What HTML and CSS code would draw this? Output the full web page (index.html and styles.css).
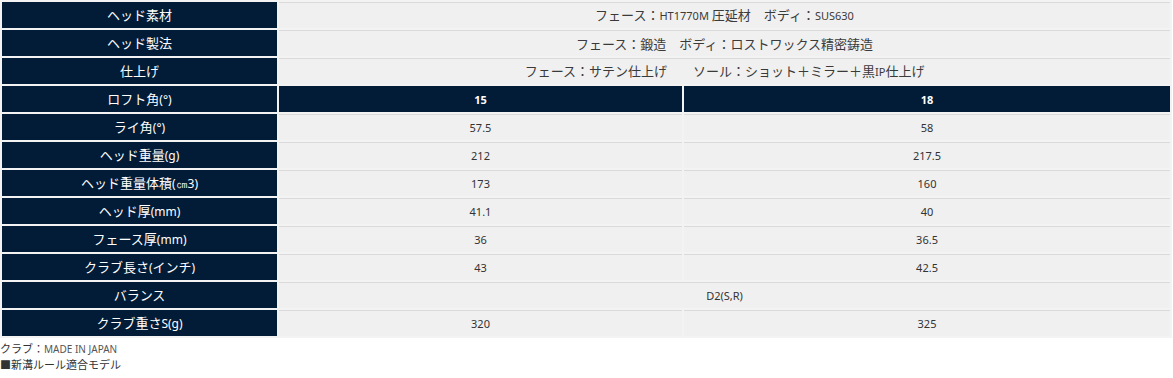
FILE: index.html
```html
<!DOCTYPE html>
<html lang="ja">
<head>
<meta charset="utf-8">
<link rel="stylesheet" href="styles.css">
</head>
<body>
<table class="spec">
  <colgroup>
    <col class="c-head">
    <col class="c-a">
    <col class="c-b">
  </colgroup>
  <tbody>
    <tr><th>ヘッド素材</th><td colspan="2" class="wide">フェース：<span class="lat">HT1770M</span> 圧延材　ボディ：<span class="lat">SUS630</span></td></tr>
    <tr><th>ヘッド製法</th><td colspan="2" class="wide">フェース：鍛造　ボディ：ロストワックス精密鋳造</td></tr>
    <tr><th>仕上げ</th><td colspan="2" class="wide">フェース：サテン仕上げ　　ソール：ショット＋ミラー＋黒<span class="lat">IP</span>仕上げ</td></tr>
    <tr class="loft"><th>ロフト角<span class="lat">(°)</span></th><td class="dark">15</td><td class="dark">18</td></tr>
    <tr><th>ライ角<span class="lat">(°)</span></th><td>57.5</td><td>58</td></tr>
    <tr><th>ヘッド重量<span class="lat">(g)</span></th><td>212</td><td>217.5</td></tr>
    <tr><th>ヘッド重量体積<span class="lat">(㎝3)</span></th><td>173</td><td>160</td></tr>
    <tr><th>ヘッド厚<span class="lat">(mm)</span></th><td>41.1</td><td>40</td></tr>
    <tr><th>フェース厚<span class="lat">(mm)</span></th><td>36</td><td>36.5</td></tr>
    <tr><th>クラブ長さ<span class="lat">(</span>インチ<span class="lat">)</span></th><td>43</td><td>42.5</td></tr>
    <tr><th>バランス</th><td colspan="2">D2(S,R)</td></tr>
    <tr><th>クラブ重さ<span class="lat">S(g)</span></th><td>320</td><td>325</td></tr>
  </tbody>
</table>
<div class="notes">
  <p class="note1">クラブ：<span class="small">MADE IN JAPAN</span></p>
  <p class="note2">■新溝ルール適合モデル</p>
</div>
</body>
</html>
```
FILE: styles.css
```css
html, body {
  margin: 0;
  padding: 0;
  background: #ffffff;
}
body {
  font-family: "Noto Sans", "Noto Sans CJK JP", sans-serif;
  color: #333333;
}
.spec {
  width: 1172px;
  table-layout: fixed;
  border-collapse: separate;
  border-spacing: 2px;
  background: #f3f3f3;
}
.c-head { width: 275px; }
.c-a { width: 403px; }
.c-b { width: 486px; }
.spec th {
  height: 26px;
  padding: 0;
  background: #021c38;
  color: #ffffff;
  font-family: "Noto Sans CJK JP", "Noto Sans", sans-serif;
  font-size: 13px;
  font-weight: normal;
  text-align: center;
  vertical-align: middle;
  line-height: 16px;
}
.spec th .lat {
  font-family: "Noto Sans", sans-serif;
  font-size: 12px;
}
.spec td {
  height: 25px;
  padding: 0;
  background: #f0f0f0;
  border-top: 1px solid #dadada;
  text-align: center;
  vertical-align: middle;
  font-size: 11px;
  line-height: 14px;
  color: #333333;
}
.spec td.wide {
  font-family: "Noto Sans CJK JP", "Noto Sans", sans-serif;
  font-size: 13px;
  line-height: 16px;
  color: #3a3a3a;
}
.spec td.wide .lat {
  font-family: "Noto Sans", sans-serif;
  font-size: 11px;
}
.spec td.dark {
  background: #021c38;
  border-top: 1px solid #021c38;
  color: #ffffff;
  font-weight: bold;
}
.notes {
  padding-top: 3px;
}
.notes p {
  margin: 0;
  font-family: "Noto Sans CJK JP", "Noto Sans", sans-serif;
  color: #333333;
}
.note1 {
  font-size: 11px;
  line-height: 15px;
}
.note1 .small {
  font-family: "Noto Sans", sans-serif;
  font-size: 10px;
  color: #555555;
}
.note2 {
  font-size: 11px;
  line-height: 15px;
}
```
